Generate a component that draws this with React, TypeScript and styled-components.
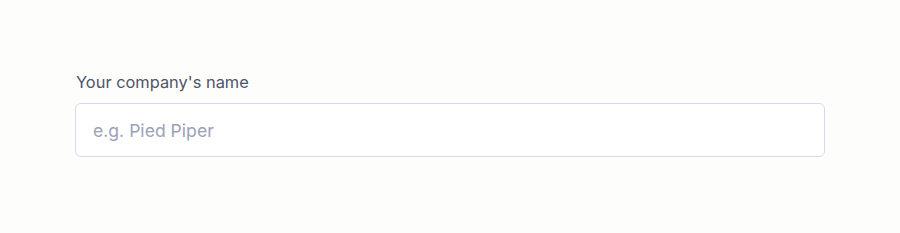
import React from 'react';
import styled, { createGlobalStyle } from 'styled-components';

const GlobalStyle = createGlobalStyle`
  body {
    margin: 0;
    background: #fdfdfc;
    font-family: Inter, "Liberation Sans", sans-serif;
  }
`;

const Page = styled.div`
  padding: 70px 75px 0 75px;
`;

const Field = styled.div`
  display: flex;
  flex-direction: column;
  gap: 9px;
  width: 750px;
`;

const Label = styled.label`
  font-size: 16.4px;
  line-height: 24px;
  font-weight: 400;
  color: #4f5468;
  padding-left: 1px;
`;

const Input = styled.input`
  box-sizing: border-box;
  height: 54px;
  width: 100%;
  padding: 0 17px;
  border: 1px solid #d7d8e8;
  border-radius: 6px;
  background: #ffffff;
  font-family: Inter, "Liberation Sans", sans-serif;
  font-size: 17.6px;
  color: #2d3142;
  outline: none;

  &::placeholder {
    color: #9da1b6;
  }
`;

const App: React.FC = () => {
  return (
    <Page>
      <GlobalStyle />
      <Field>
        <Label htmlFor="company">Your company's name</Label>
        <Input id="company" placeholder="e.g. Pied Piper" />
      </Field>
    </Page>
  );
};

export default App;
